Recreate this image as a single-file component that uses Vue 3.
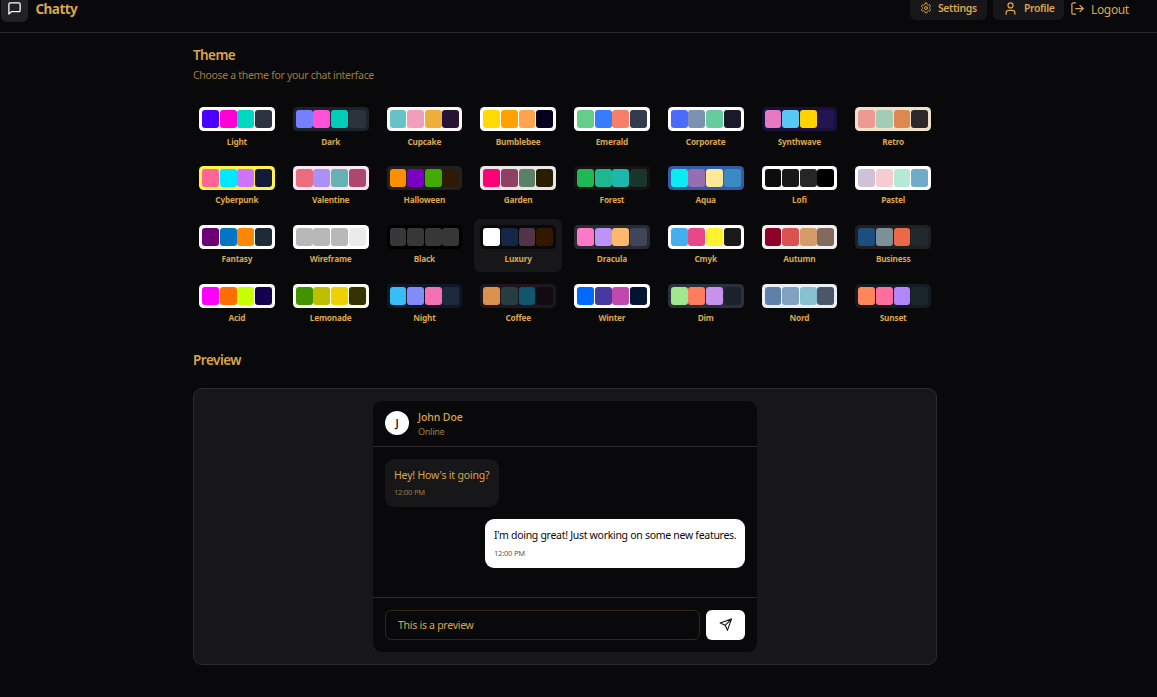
<script setup>
const themes = [
  ['Light', '#ffffff', '#4b00ff', '#ff00d3', '#00d7c0', '#2b3440'],
  ['Dark', '#1d232a', '#7480ff', '#ff52d9', '#00cdb7', '#2a323c'],
  ['Cupcake', '#faf7f5', '#65c3c8', '#ef9fbc', '#eeaf3a', '#291334'],
  ['Bumblebee', '#ffffff', '#ffd900', '#ffa200', '#ffa350', '#06001f'],
  ['Emerald', '#ffffff', '#66cc8a', '#377cfb', '#f68067', '#333c4d'],
  ['Corporate', '#ffffff', '#4b6bfb', '#7b92b2', '#67cba0', '#181a2a'],
  ['Synthwave', '#1a103d', '#e779c1', '#58c7f3', '#ffd200', '#221551'],
  ['Retro', '#ece3ca', '#ef9995', '#a4cbb4', '#dc8850', '#2e282a'],
  ['Cyberpunk', '#fff248', '#ff6596', '#00e8ff', '#ce74ff', '#111a3b'],
  ['Valentine', '#fae7f4', '#e96d7b', '#a991f7', '#66b1b3', '#af4670'],
  ['Halloween', '#212121', '#ff8f00', '#7a00c2', '#42aa00', '#2f1b05'],
  ['Garden', '#e9e7e7', '#fe0075', '#8e4162', '#5c7f67', '#291e00'],
  ['Forest', '#171212', '#1eb854', '#1eb88e', '#1eb8ab', '#19362d'],
  ['Aqua', '#345da7', '#09ecf3', '#966fb3', '#ffe999', '#3b8ac4'],
  ['Lofi', '#ffffff', '#0d0d0d', '#1a1919', '#262626', '#000000'],
  ['Pastel', '#ffffff', '#d1c1d7', '#f6cbd1', '#b4e9d6', '#70acc7'],
  ['Fantasy', '#ffffff', '#6d0076', '#0075c2', '#ff8600', '#1f2937'],
  ['Wireframe', '#ffffff', '#b8b8b8', '#b8b8b8', '#b8b8b8', '#ebebeb'],
  ['Black', '#000000', '#373737', '#373737', '#373737', '#373737'],
  ['Luxury', '#09090b', '#ffffff', '#152747', '#513448', '#331800'],
  ['Dracula', '#282a36', '#ff79c6', '#bd93f9', '#ffb86c', '#414558'],
  ['Cmyk', '#ffffff', '#45aeee', '#e8488a', '#fff232', '#1a1a1a'],
  ['Autumn', '#f1f1f1', '#8c0327', '#d85251', '#d59b6a', '#826a5c'],
  ['Business', '#202020', '#1c4e80', '#7c909a', '#ea6947', '#23282f'],
  ['Acid', '#fafafa', '#ff00ff', '#ff6e00', '#c8ff00', '#150050'],
  ['Lemonade', '#f8fdef', '#419400', '#bdc000', '#efd000', '#343300'],
  ['Night', '#0f172a', '#38bdf8', '#818cf8', '#f471b5', '#1e293b'],
  ['Coffee', '#20161f', '#db924c', '#263e3f', '#10576d', '#120c12'],
  ['Winter', '#ffffff', '#0069ff', '#463aa2', '#c148ac', '#021431'],
  ['Dim', '#2a303c', '#9fe88d', '#ff7d5c', '#c792e9', '#1c212b'],
  ['Nord', '#eceff4', '#5e81ac', '#81a1c1', '#88c0d0', '#4c566a'],
  ['Sunset', '#121c22', '#ff865b', '#fd6f9c', '#b387fa', '#1b262c'],
].map(([name, base, ...colors]) => ({ name, base, colors }))
const selected = 'Luxury'
</script>

<template>
  <div class="page">
    <header class="nav">
      <div class="brand">
        <span class="logo">
          <svg class="icon" width="15" height="15" viewBox="0 0 24 24"><path d="M21 15a2 2 0 0 1-2 2H7l-4 4V5a2 2 0 0 1 2-2h14a2 2 0 0 1 2 2z" /></svg>
        </span>
        <h1 class="brand-name">Chatty</h1>
      </div>
      <nav class="actions">
        <a class="btn settings">
          <svg class="icon" width="12" height="12" viewBox="0 0 24 24">
            <path d="M12.22 2h-.44a2 2 0 0 0-2 2v.18a2 2 0 0 1-1 1.73l-.43.25a2 2 0 0 1-2 0l-.15-.08a2 2 0 0 0-2.73.73l-.22.38a2 2 0 0 0 .73 2.73l.15.1a2 2 0 0 1 1 1.72v.51a2 2 0 0 1-1 1.74l-.15.09a2 2 0 0 0-.73 2.73l.22.38a2 2 0 0 0 2.73.73l.15-.08a2 2 0 0 1 2 0l.43.25a2 2 0 0 1 1 1.73V20a2 2 0 0 0 2 2h.44a2 2 0 0 0 2-2v-.18a2 2 0 0 1 1-1.73l.43-.25a2 2 0 0 1 2 0l.15.08a2 2 0 0 0 2.73-.73l.22-.39a2 2 0 0 0-.73-2.73l-.15-.08a2 2 0 0 1-1-1.74v-.5a2 2 0 0 1 1-1.74l.15-.09a2 2 0 0 0 .73-2.73l-.22-.38a2 2 0 0 0-2.73-.73l-.15.08a2 2 0 0 1-2 0l-.43-.25a2 2 0 0 1-1-1.73V4a2 2 0 0 0-2-2z" />
            <circle cx="12" cy="12" r="3" />
          </svg>
          <span>Settings</span>
        </a>
        <a class="btn profile">
          <svg class="icon" width="15" height="15" viewBox="0 0 24 24">
            <path d="M19 21v-2a4 4 0 0 0-4-4H9a4 4 0 0 0-4 4v2" /><circle cx="12" cy="7" r="4" />
          </svg>
          <span>Profile</span>
        </a>
        <a class="logout">
          <svg class="icon" width="15" height="15" viewBox="0 0 24 24">
            <path d="M9 21H5a2 2 0 0 1-2-2V5a2 2 0 0 1 2-2h4" /><path d="M16 17l5-5-5-5" /><path d="M21 12H9" />
          </svg>
          <span>Logout</span>
        </a>
      </nav>
    </header>

    <main class="content">
      <h2 class="title">Theme</h2>
      <p class="subtitle">Choose a theme for your chat interface</p>

      <div class="themes">
        <div v-for="t in themes" :key="t.name" class="theme" :class="{ active: t.name === selected }">
          <div class="swatch" :style="{ background: t.base }">
            <i v-for="(c, i) in t.colors" :key="i" :style="{ background: c }"></i>
          </div>
          <span class="theme-name">{{ t.name }}</span>
        </div>
      </div>

      <h2 class="title preview-title">Preview</h2>
      <section class="preview">
        <div class="chat">
          <div class="chat-head">
            <div class="avatar">J</div>
            <div class="who">
              <h3 class="person">John Doe</h3>
              <p class="status">Online</p>
            </div>
          </div>
          <div class="messages">
            <div class="bubble received">
              <p class="text">Hey! How's it going?</p>
              <p class="time">12:00 PM</p>
            </div>
            <div class="bubble sent">
              <p class="text">I'm doing great! Just working on some new features.</p>
              <p class="time">12:00 PM</p>
            </div>
          </div>
          <div class="composer">
            <div class="input">This is a preview</div>
            <div class="send">
              <svg class="icon" width="13.5" height="13.5" viewBox="0 0 24 24">
                <path d="m22 2-7 20-4-9-9-4Z" /><path d="M22 2 11 13" />
              </svg>
            </div>
          </div>
        </div>
      </section>
    </main>
  </div>
</template>

<style>
html, body { background: #09090b; overflow: hidden; }
</style>

<style scoped>
* { box-sizing: border-box; margin: 0; padding: 0; }
.page { height: 697px; overflow: hidden; background: #09090b; color: #dca54c; font-family: "Noto Sans", "Open Sans", sans-serif; font-size: 12px; white-space: nowrap; }
.icon { display: block; flex: none; fill: none; stroke: currentColor; stroke-width: 2; stroke-linecap: round; stroke-linejoin: round; }
.nav { height: 33px; border-bottom: 1px solid #2c2c2e; display: flex; justify-content: space-between; padding: 0 28px 0 1px; }
.brand { display: flex; gap: 7.5px; }
.logo { width: 27px; height: 27px; margin-top: -5px; border-radius: 6px; background: #222224; color: #fff; display: flex; align-items: center; justify-content: center; }
.brand-name { font-size: 13.5px; line-height: 20px; margin-top: -1px; font-weight: 700; letter-spacing: -0.55px; }
.actions { display: flex; }
.btn { height: 24px; margin-top: -4px; border-radius: 6px; background: #171618; display: flex; align-items: center; font-size: 10.5px; font-weight: 600; letter-spacing: -0.4px; }
.settings { width: 77px; padding-left: 10px; gap: 6px; margin-right: 6px; }
.profile { width: 71px; padding-left: 10px; gap: 6px; margin-right: 6px; }
.logout { width: 59px; height: 18px; display: flex; align-items: center; gap: 6px; font-size: 12px; letter-spacing: -0.35px; }
.logout .icon { margin-top: -1px; }
.content { width: 744px; margin-left: 193px; padding-top: 12px; }
.title { font-size: 13.5px; line-height: 21px; font-weight: 600; letter-spacing: -0.6px; }
.subtitle { font-size: 10.5px; line-height: 18px; letter-spacing: -0.31px; color: #a27b3b; }
.themes { margin-top: 17px; display: grid; grid-template-columns: repeat(8, minmax(0, 1fr)); gap: 6px; }
.theme { display: flex; flex-direction: column; align-items: center; gap: 4.5px; padding: 6px; border-radius: 6px; height: 52.9px; }
.theme.active { background: #171618; }
.swatch { width: 100%; height: 24px; flex: none; border-radius: 4.5px; padding: 3px; display: grid; grid-template-columns: repeat(4, 1fr); gap: 0.75px; }
.swatch i { border-radius: 3px; }
.theme-name { font-size: 8.25px; line-height: 12.4px; font-weight: 700; letter-spacing: -0.2px; }
.preview-title { margin-top: 19px; letter-spacing: -0.5px; }
.preview { margin-top: 17px; height: 277px; border: 1px solid #2c2c2e; border-radius: 9px; background: #171618; padding: 12px 0; display: flex; justify-content: center; }
.chat { width: 384px; height: 251px; border-radius: 9px; overflow: hidden; background: #09090b; display: flex; flex-direction: column; }
.chat-head { height: 46px; border-bottom: 1px solid #2c2c2e; padding: 0 12px; display: flex; align-items: center; gap: 9px; }
.avatar { width: 24px; height: 24px; border-radius: 50%; background: #fff; color: #161616; font-size: 10.5px; font-weight: 600; display: flex; align-items: center; justify-content: center; }
.who { padding-top: 2px; }
.person { font-size: 10.5px; line-height: 15px; font-weight: 500; letter-spacing: -0.1px; }
.status { font-size: 9px; line-height: 14px; letter-spacing: -0.25px; color: #a27b3b; }
.messages { height: 150px; padding: 12px; display: flex; flex-direction: column; gap: 12px; }
.bubble { border-radius: 9px; padding: 9px 9px 0; }
.received { align-self: flex-start; width: 114px; height: 48px; background: #171618; }
.sent { align-self: flex-end; width: 260px; height: 49px; background: #fff; color: #09090b; }
.text { font-size: 10.5px; line-height: 15px; }
.received .text { letter-spacing: -0.18px; }
.sent .text { letter-spacing: -0.29px; }
.time { font-size: 7.5px; line-height: 11px; margin-top: 4px; letter-spacing: -0.2px; opacity: 0.7; }
.sent .time { margin-top: 5px; }
.composer { height: 55px; border-top: 1px solid #2c2c2e; padding: 12px; display: flex; gap: 6px; }
.input { flex: 1; height: 30px; border: 1px solid #332818; border-radius: 6px; padding-left: 12px; font-size: 10.5px; line-height: 28px; letter-spacing: -0.27px; }
.send { width: 39px; height: 30px; border-radius: 6px; background: #fff; color: #161616; display: flex; align-items: center; justify-content: center; }
</style>
